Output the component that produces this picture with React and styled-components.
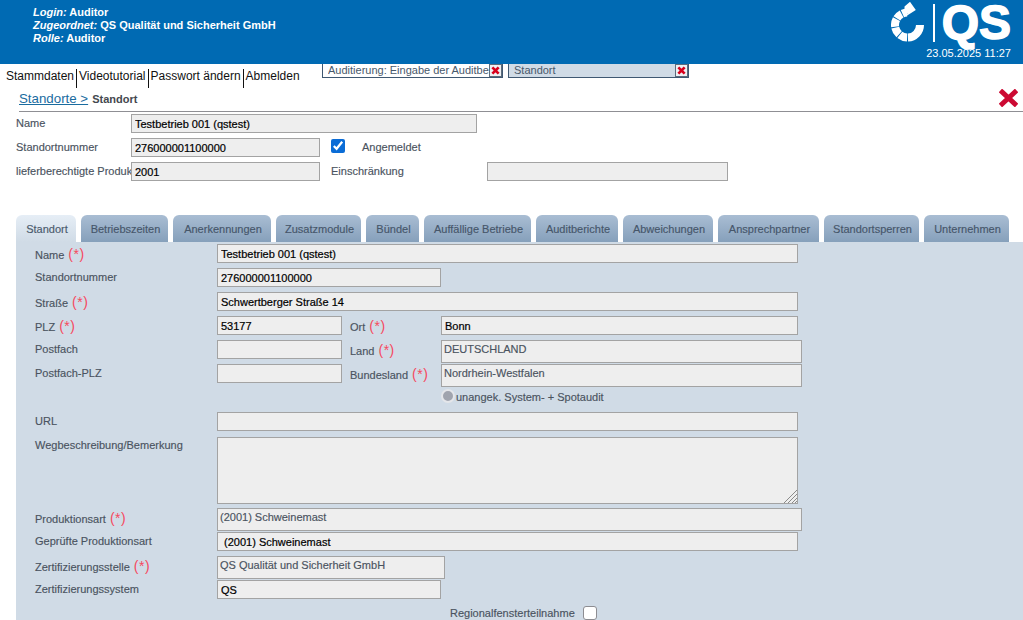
import React from "react";
import styled, { createGlobalStyle } from "styled-components";

const GlobalStyle = createGlobalStyle`
  html, body {
    margin: 0;
    height: 100%;
    overflow: hidden;
    background: #fff;
    font-family: "Liberation Sans", Arial, sans-serif;
  }
  #root { height: 100%; }
`;

const Page = styled.div`
  display: flex;
  flex-direction: column;
  height: 620px;
  overflow: hidden;
`;

const Header = styled.header`
  display: flex;
  justify-content: space-between;
  flex: 0 0 64px;
  box-sizing: border-box;
  padding: 6px 12px 0 33px;
  background: #006ab3;
  color: #fff;
`;

const UserInfo = styled.div`
  font-size: 11px;
  line-height: 13px;
  font-weight: 700;
  em { font-style: italic; }
`;

const Brand = styled.div`
  display: flex;
  flex-direction: column;
  align-items: flex-end;
`;

const Logo = styled.div`
  display: flex;
  align-items: center;
  height: 40px;
  margin-top: -3px;
`;

const LogoDivider = styled.span`
  width: 2px;
  height: 38px;
  margin: 0 7px 0 4px;
  background: #fff;
`;

const LogoText = styled.span`
  font-size: 48px;
  line-height: 40px;
  font-weight: 700;
  -webkit-text-stroke: 1.5px #fff;
`;

const DateTime = styled.div`
  margin-top: 4px;
  font-size: 11px;
  line-height: 13px;
`;

const TopBar = styled.div`
  display: flex;
  flex: 0 0 24px;
`;

const Nav = styled.nav`
  display: flex;
  width: 322px;
  box-sizing: border-box;
  padding: 5px 0 0 6px;
  font-size: 12px;
  line-height: 14px;
  color: #111;
`;

const NavItem = styled.a`
  padding-right: 2px;
  & + & {
    border-left: 1px solid #111;
    padding-left: 2px;
  }
`;

const DocTab = styled.div`
  display: flex;
  align-items: center;
  justify-content: space-between;
  width: 181px;
  height: 14px;
  box-sizing: border-box;
  margin-right: 5px;
  padding-left: 5px;
  border: 1px solid #3f5872;
  border-top: 0;
  background: ${(p) => (p.$active ? "#d0dbe6" : "#fff")};
  color: #48586b;
  font-size: 11px;
  line-height: 13px;
`;

const DocTabLabel = styled.span`
  overflow: hidden;
  white-space: nowrap;
  flex: 1;
`;

const CloseBox = styled.span`
  display: flex;
  align-items: center;
  justify-content: center;
  flex: 0 0 11px;
  height: 11px;
  border: 1px solid #5c6c7c;
  background: #eef1f4;
`;

const Crumbs = styled.div`
  display: flex;
  align-items: center;
  justify-content: space-between;
  flex: 0 0 24px;
  box-sizing: border-box;
  margin-left: 19px;
  padding: 0 5px 3px 0;
  border-bottom: 1px solid #8f8f94;
`;

const CrumbPath = styled.div`
  display: flex;
  align-items: baseline;
  gap: 4px;
`;

const CrumbLink = styled.a`
  font-size: 13.3px;
  color: #1a6c9f;
  text-decoration: underline;
`;

const CrumbCurrent = styled.span`
  font-size: 11px;
  font-weight: 700;
  color: #44484e;
`;

const SiteForm = styled.section`
  display: flex;
  flex-direction: column;
  flex: none;
  margin-top: 2px;
  padding-left: 16px;
`;

const SiteRow = styled.div`
  display: flex;
  align-items: flex-start;
  height: 24px;
`;

const SiteLabel = styled.label`
  flex: 0 0 115px;
  overflow: hidden;
  white-space: nowrap;
  padding-top: 2px;
  font-size: 11px;
  line-height: 14px;
  color: #4a5360;
  -webkit-text-stroke: 0.15px #4a5360;
`;

const Input = styled.input`
  display: block;
  box-sizing: border-box;
  flex: none;
  width: ${(p) => p.$w}px;
  height: 19px;
  padding: 0 3px;
  border: 1px solid #a3a3a3;
  border-radius: 0;
  outline: 0;
  background: #eee;
  color: #000;
  font: 11px "Liberation Sans", Arial, sans-serif;
  -webkit-text-stroke: 0.2px #000;
`;

const CheckMark = styled.input`
  flex: none;
  width: 14px;
  height: 14px;
  margin: 1px 0 0 11px;
  accent-color: #0a6cd6;
`;

const CheckCaption = styled.span`
  margin-left: 17px;
  padding-top: 2px;
  font-size: 11px;
  line-height: 14px;
  color: #4a5360;
  -webkit-text-stroke: 0.15px #4a5360;
`;

const RestrictionLabel = styled.span`
  flex: 0 0 156px;
  margin-left: 11px;
  padding-top: 2px;
  font-size: 11px;
  line-height: 14px;
  color: #4a5360;
  -webkit-text-stroke: 0.15px #4a5360;
`;

const TabStrip = styled.div`
  display: flex;
  flex: none;
  gap: 5px;
  margin: 29px 0 0 16px;
  height: 27px;
`;

const Tab = styled.div`
  display: flex;
  align-items: center;
  justify-content: center;
  box-sizing: border-box;
  width: ${(p) => p.$w}px;
  padding: 1px 0 0 2px;
  border-radius: 6px 6px 0 0;
  background: ${(p) =>
    p.$active
      ? "linear-gradient(#e6eef6, #d0dbe6)"
      : "linear-gradient(#a9bdd3, #86a0bb)"};
  color: ${(p) => (p.$active ? "#4a5a6c" : "#46566a")};
  font-size: 11px;
  white-space: nowrap;
  -webkit-text-stroke: 0.15px ${(p) => (p.$active ? "#4a5a6c" : "#46566a")};
`;

const Panel = styled.section`
  flex: 1 0 auto;
  display: flex;
  flex-direction: column;
  margin-left: 16px;
  padding: 2px 0 0 19px;
  background: #d0dbe6;
`;

const Row = styled.div`
  display: flex;
  align-items: flex-start;
  flex: none;
  height: 24px;
`;

const Label = styled.label`
  flex: 0 0 ${(p) => p.$w || 182}px;
  padding-top: ${(p) => p.$top ?? 2}px;
  font-size: 11px;
  line-height: 14px;
  color: #4a5360;
  white-space: nowrap;
  -webkit-text-stroke: 0.15px #4a5360;
`;

const InnerLabel = styled(Label)`
  margin-left: 8px;
`;

const Required = styled.span`
  margin-left: 4px;
  color: #f6495e;
  font-size: 14px;
  line-height: 14px;
  letter-spacing: 0.5px;
  -webkit-text-stroke: 0;
`;

const ListField = styled.div`
  box-sizing: border-box;
  flex: none;
  width: ${(p) => p.$w}px;
  height: 23px;
  padding: 1px 2px;
  border: 1px solid #a3a3a3;
  background: #eee;
  color: #4a5360;
  font-size: 11px;
  line-height: 14px;
  -webkit-text-stroke: 0.15px #4a5360;
`;

const RadioRow = styled.div`
  display: flex;
  align-items: center;
  flex: none;
  height: 24px;
  box-sizing: border-box;
  padding: 0 0 6px 406px;
  font-size: 11px;
  color: #4a5360;
  -webkit-text-stroke: 0.15px #4a5360;
`;

const RadioDot = styled.span`
  display: block;
  box-sizing: border-box;
  width: 14px;
  height: 14px;
  margin: -2px 1px 0 0;
  border: 2px solid #e4e6ea;
  border-radius: 50%;
  background: #a0a4ae;
`;

const NotesRow = styled.div`
  display: flex;
  align-items: flex-start;
  flex: none;
  height: 72px;
`;

const NotesBox = styled.div`
  position: relative;
  flex: none;
  width: 581px;
  height: 67px;
  margin-top: 1px;
`;

const Notes = styled.textarea`
  display: block;
  box-sizing: border-box;
  width: 100%;
  height: 100%;
  margin: 0;
  padding: 2px 3px;
  border: 1px solid #a3a3a3;
  border-radius: 0;
  outline: 0;
  background: #eee;
  resize: none;
`;

const Grip = styled.svg`
  position: absolute;
  right: 1px;
  bottom: 1px;
`;

const RegionRow = styled.div`
  display: flex;
  align-items: center;
  flex: none;
  height: 18px;
  padding-left: 415px;
  font-size: 11px;
  color: #4a5360;
  -webkit-text-stroke: 0.15px #4a5360;
`;

const RegionCheck = styled.span`
  display: block;
  box-sizing: border-box;
  width: 14px;
  height: 14px;
  margin-left: 8px;
  border: 1px solid #8d8d92;
  border-radius: 3px;
  background: #fff;
`;

const SmallCross = () => (
  <svg width="9" height="9" viewBox="0 0 10 10">
    <path d="M1.5 1.5l7 7M8.5 1.5l-7 7" stroke="#d8001c" strokeWidth="3" />
  </svg>
);

const BigCross = () => (
  <svg width="19" height="18" viewBox="0 0 19 18">
    <path d="M2.5 2.5l14 13M16.5 2.5l-14 13" stroke="#cc0a33" strokeWidth="5.5" strokeLinecap="square" transform="translate(9.500 9) scale(.9) translate(-9.500 -9)" />
  </svg>
);

// annular sector, angles clockwise from 12 o'clock, centre of the ring at 16.5/25
const sector = (from, to, inner = 8.5, outer = 16.5) => {
  const pt = (a, r) => {
    const rad = (a * Math.PI) / 180;
    return `${(16.5 + r * Math.sin(rad)).toFixed(2)} ${(25 - r * Math.cos(rad)).toFixed(2)}`;
  };
  const large = to - from > 180 ? 1 : 0;
  return `M${pt(from, outer)}A${outer} ${outer} 0 ${large} 1 ${pt(to, outer)}L${pt(to, inner)}A${inner} ${inner} 0 ${large} 0 ${pt(from, inner)}Z`;
};

const ringParts = [
  [90, 178],
  [182, 218],
  [222, 258],
  [262, 298],
  [302, 332],
  [336, 358],
];

const LogoArrow = () => (
  <svg width="38" height="42" viewBox="0 2 38 42" fill="#fff">
    {ringParts.map(([from, to]) => (
      <path key={from} d={sector(from, to)} />
    ))}
    <path d="M13.500 6.500 19 1.800 24.800 10 15 16.300 16.500 13 13.500 15.500Z" />
  </svg>
);

const mainTabs = [
  ["Standort", 60],
  ["Betriebszeiten", 87],
  ["Anerkennungen", 98],
  ["Zusatzmodule", 85],
  ["Bündel", 53],
  ["Auffällige Betriebe", 107],
  ["Auditberichte", 82],
  ["Abweichungen", 90],
  ["Ansprechpartner", 101],
  ["Standortsperren", 95],
  ["Unternehmen", 85],
];

export default function App() {
  return (
    <Page>
      <GlobalStyle />
      <Header>
        <UserInfo>
          <div><em>Login:</em> Auditor</div>
          <div><em>Zugeordnet:</em> QS Qualität und Sicherheit GmbH</div>
          <div><em>Rolle:</em> Auditor</div>
        </UserInfo>
        <Brand>
          <Logo>
            <LogoArrow />
            <LogoDivider />
            <LogoText>QS</LogoText>
          </Logo>
          <DateTime>23.05.2025 11:27</DateTime>
        </Brand>
      </Header>

      <TopBar>
        <Nav>
          <NavItem>Stammdaten</NavItem>
          <NavItem>Videotutorial</NavItem>
          <NavItem>Passwort ändern</NavItem>
          <NavItem>Abmelden</NavItem>
        </Nav>
        <DocTab>
          <DocTabLabel>Auditierung: Eingabe der Auditbe</DocTabLabel>
          <CloseBox><SmallCross /></CloseBox>
        </DocTab>
        <DocTab $active>
          <DocTabLabel>Standort</DocTabLabel>
          <CloseBox><SmallCross /></CloseBox>
        </DocTab>
      </TopBar>

      <Crumbs>
        <CrumbPath>
          <CrumbLink>Standorte &gt;</CrumbLink>
          <CrumbCurrent>Standort</CrumbCurrent>
        </CrumbPath>
        <BigCross />
      </Crumbs>

      <SiteForm>
        <SiteRow>
          <SiteLabel>Name</SiteLabel>
          <Input $w={346} readOnly value="Testbetrieb 001 (qstest)" />
        </SiteRow>
        <SiteRow>
          <SiteLabel>Standortnummer</SiteLabel>
          <Input $w={189} readOnly value="276000001100000" />
          <CheckMark type="checkbox" readOnly checked />
          <CheckCaption>Angemeldet</CheckCaption>
        </SiteRow>
        <SiteRow>
          <SiteLabel>lieferberechtigte Produktionsarten</SiteLabel>
          <Input $w={189} readOnly value="2001" />
          <RestrictionLabel>Einschränkung</RestrictionLabel>
          <Input $w={241} readOnly value="" />
        </SiteRow>
      </SiteForm>

      <TabStrip>
        {mainTabs.map(([name, w], i) => (
          <Tab key={name} $w={w} $active={i === 0}>{name}</Tab>
        ))}
      </TabStrip>

      <Panel>
        <Row>
          <Label $top={3}>Name<Required>(*)</Required></Label>
          <Input $w={581} readOnly value="Testbetrieb 001 (qstest)" />
        </Row>
        <Row>
          <Label>Standortnummer</Label>
          <Input $w={224} readOnly value="276000001100000" />
        </Row>
        <Row>
          <Label $top={3}>Straße<Required>(*)</Required></Label>
          <Input $w={581} readOnly value="Schwertberger Straße 14" />
        </Row>
        <Row>
          <Label $top={3}>PLZ<Required>(*)</Required></Label>
          <Input $w={125} readOnly value="53177" />
          <InnerLabel $w={91} $top={3}>Ort<Required>(*)</Required></InnerLabel>
          <Input $w={357} readOnly value="Bonn" />
        </Row>
        <Row>
          <Label>Postfach</Label>
          <Input $w={125} readOnly value="" />
          <InnerLabel $w={91} $top={3}>Land<Required>(*)</Required></InnerLabel>
          <ListField $w={361}>DEUTSCHLAND</ListField>
        </Row>
        <Row>
          <Label>Postfach-PLZ</Label>
          <Input $w={125} readOnly value="" />
          <InnerLabel $w={91} $top={3}>Bundesland<Required>(*)</Required></InnerLabel>
          <ListField $w={361}>Nordrhein-Westfalen</ListField>
        </Row>
        <RadioRow>
          <RadioDot />
          unangek. System- + Spotaudit
        </RadioRow>
        <Row>
          <Label>URL</Label>
          <Input $w={581} readOnly value="" />
        </Row>
        <NotesRow>
          <Label>Wegbeschreibung/Bemerkung</Label>
          <NotesBox>
            <Notes readOnly />
            <Grip width="14" height="14" viewBox="0 0 14 14" stroke="#8a8a8a" strokeWidth="1">
              <path d="M1 14 14 1M5 14 14 5M9 14l5-5M12 14l2-2" />
            </Grip>
          </NotesBox>
        </NotesRow>
        <Row>
          <Label $top={3}>Produktionsart<Required>(*)</Required></Label>
          <ListField $w={585}>(2001) Schweinemast</ListField>
        </Row>
        <Row>
          <Label>Geprüfte Produktionsart</Label>
          <Input $w={581} readOnly value=" (2001) Schweinemast" />
        </Row>
        <Row>
          <Label $top={3}>Zertifizierungsstelle<Required>(*)</Required></Label>
          <ListField $w={228}>QS Qualität und Sicherheit GmbH</ListField>
        </Row>
        <Row>
          <Label>Zertifizierungssystem</Label>
          <Input $w={224} readOnly value="QS" />
        </Row>
        <RegionRow>
          Regionalfensterteilnahme
          <RegionCheck />
        </RegionRow>
      </Panel>
    </Page>
  );
}
